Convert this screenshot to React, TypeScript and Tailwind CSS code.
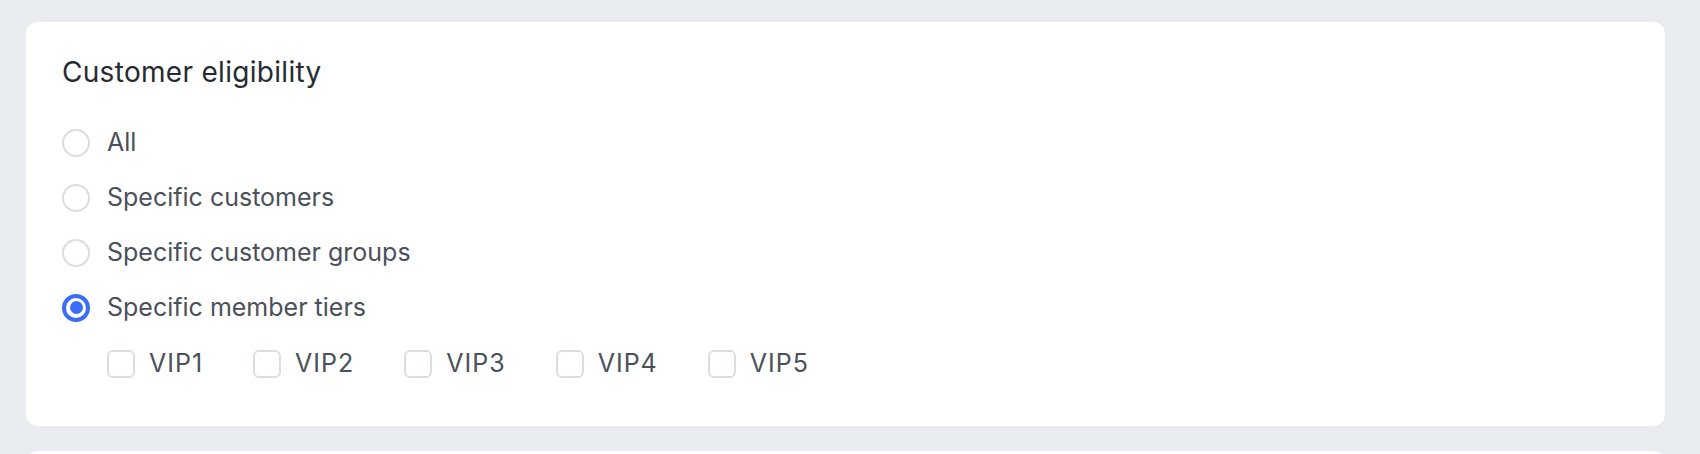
import { useState } from "react";

const options = [
  { id: "all", label: "All" },
  { id: "customers", label: "Specific customers" },
  { id: "groups", label: "Specific customer groups" },
  { id: "tiers", label: "Specific member tiers" },
];

const tiers = ["VIP1", "VIP2", "VIP3", "VIP4", "VIP5"];

export default function App() {
  const [selected, setSelected] = useState("tiers");
  const [checked, setChecked] = useState<string[]>([]);

  const toggle = (t: string) =>
    setChecked((c) => (c.includes(t) ? c.filter((x) => x !== t) : [...c, t]));

  return (
    <div
      className="h-screen overflow-hidden bg-[#e9ecf1] pl-[26px] pr-[35px] pt-[22px]"
      style={{ fontFamily: "Inter, 'Noto Sans', sans-serif" }}
    >
      {/* Eligibility card */}
      <section className="rounded-xl bg-white pl-[36px] pt-[32px] pb-[37px]">
        <h2 className="text-[28px] leading-[36px] font-normal tracking-[0.3px] text-[#272a31]">
          Customer eligibility
        </h2>

        <div className="mt-[25px] flex flex-col">
          {options.map((opt) => {
            const active = selected === opt.id;
            return (
              <label
                key={opt.id}
                className="flex h-[55px] cursor-pointer items-center gap-[17px]"
                onClick={() => setSelected(opt.id)}
              >
                {active ? (
                  <span className="flex h-[28px] w-[28px] items-center justify-center rounded-full border-[4px] border-[#3b6ef6] bg-white">
                    <span className="h-[13px] w-[13px] rounded-full bg-[#3b6ef6]" />
                  </span>
                ) : (
                  <span className="h-[28px] w-[28px] rounded-full border-2 border-[#dadde3] bg-white" />
                )}
                <span className="text-[25px] text-[#4b505a]">{opt.label}</span>
              </label>
            );
          })}
        </div>

        <div className="ml-[45px] mt-[4px] flex h-[50px] items-center gap-[50px]">
          {tiers.map((t) => (
            <label
              key={t}
              className="flex cursor-pointer items-center gap-[14px]"
              onClick={() => toggle(t)}
            >
              <span
                className={`h-[28px] w-[28px] rounded-md border-2 ${
                  checked.includes(t) ? "border-[#3b6ef6] bg-[#3b6ef6]" : "border-[#dadde3] bg-white"
                }`}
              />
              <span className="text-[25px] tracking-[1px] text-[#4b505a]">{t}</span>
            </label>
          ))}
        </div>
      </section>

      {/* Next card peeking in */}
      <section className="mt-[25px] h-[40px] rounded-xl bg-white" />
    </div>
  );
}
